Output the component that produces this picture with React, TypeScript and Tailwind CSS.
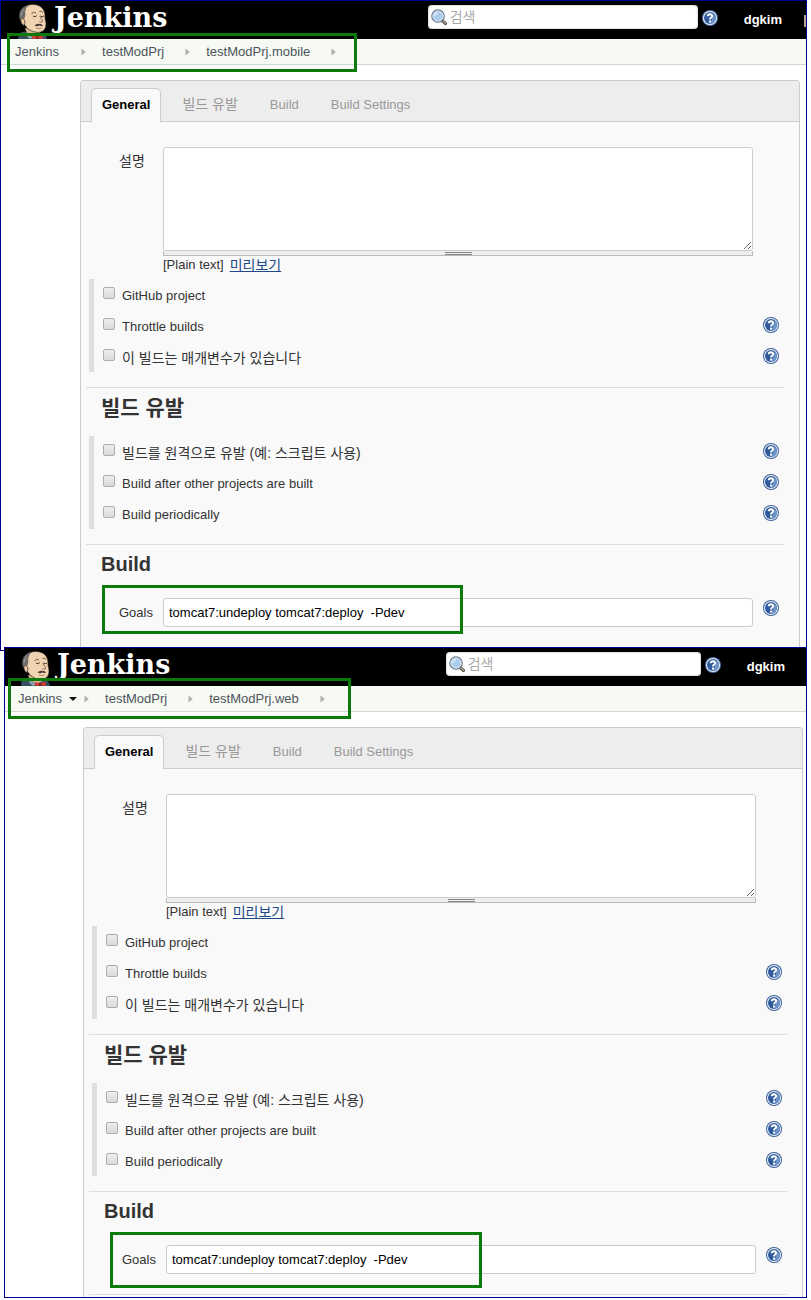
import React from "react";

type PanelProps = {
  id: string;
  module: string;
  menuOpen?: boolean;
  divider?: boolean;
  frame: string;
  headerPad: string;
  searchWidth: string;
  userMargin: string;
  cardMargin: string;
  crumbPad: string;
  crumbMark: string;
  goalsMark: string;
};

function Mascot() {
  return (
    <svg viewBox="0 0 30 35" className="h-[35px] w-[30px] shrink-0" aria-hidden="true">
      <path d="M0 35 L0.500 30 Q3 27.500 7 27.500 L14 32 L24 29 Q28 29.500 29 35 Z" fill="#34505f" />
      <path d="M7 24 L9 29 L15 33 L22 30 L22 26 Z" fill="#d9b794" />
      <path d="M8 28 L15 33.500 L12 35 L8.500 32 Z" fill="#8fa0a8" />
      <path
        d="M8 2 Q13 -0.500 18 0.700 Q24.500 2 26.500 8 Q27.300 11 27 14 Q28.800 20 27.600 23.500 Q25.500 28.300 20 28.500 Q14 28.500 9.500 24.500 L6 20 Q3 17 4.500 12 Z"
        fill="#f0d3b0"
        stroke="#2c211c"
        strokeWidth="0.700"
      />
      <path d="M11 0.800 Q3 2.500 1.500 9 Q0.800 13 2 16 L5 15 L6.500 14.500 L7.500 10 Q6.500 8.500 7.500 6.500 Q8 3.500 11 0.800 Z" fill="#6e6b6a" />
      <path d="M3 12 Q3 8 6 5.500" fill="none" stroke="#a7a3a0" strokeWidth="0.900" />
      <path d="M2.500 15.500 Q5 13.500 6.700 16 Q7.500 19.500 6 21.500 Q3 20.500 2.500 15.500 Z" fill="#ecc9a6" stroke="#3a2a22" strokeWidth="0.700" />
      <path d="M13.500 9.800 Q15.500 7.200 18 9 M21.500 7.500 Q23.500 6.500 25 8.500" fill="none" stroke="#4b372c" strokeWidth="0.800" />
      <path d="M15 12 Q17.500 13.800 18.800 11.500 M22.300 12 Q24 13.600 26 12" fill="none" stroke="#33251e" strokeWidth="0.900" />
      <path d="M21.700 12.500 Q24.500 15.500 24.700 17.300 Q23.500 19 21.300 17.800" fill="none" stroke="#6a4838" strokeWidth="0.800" />
      <path d="M16.500 21.500 Q19 18.800 21.500 20 Q24 19.500 25 21.500 Q23 22.500 21.300 21.600 Q19 23 16.500 21.500 Z" fill="#493a33" />
      <path d="M18 24 Q20.500 25.500 23.500 23.800" fill="none" stroke="#8a5a48" strokeWidth="0.700" />
      <path d="M14 31 L19 32.300 L24.500 30.500 L25 35 L20 34.300 L14.500 35 Z" fill="#d43a30" />
      <path d="M18 32 L20.500 32 L20.500 35 L18 35 Z" fill="#8d221d" />
    </svg>
  );
}

function HelpButton({ label, dark }: { label: string; dark?: boolean }) {
  return (
    <button type="button" aria-label={label} className="block h-4 w-4 shrink-0">
      <svg viewBox="0 0 16 16" className="h-4 w-4" aria-hidden="true">
        <circle cx="8" cy="8" r="8" fill={dark ? "#4a6fa8" : "#3a5f98"} />
        <circle cx="8" cy="8" r="7" fill="#f2f6fb" />
        <circle cx="8" cy="8" r="6" fill="#2f5a9b" />
        <path d="M8 14 A6 6 0 0 0 14 8 A6 6 0 0 0 12 3.500 Z" fill="#6d94c8" />
        <path d="M5.700 6.200 Q5.800 4.200 8 4.200 Q10.300 4.300 10.200 6 Q10.100 7.100 8.900 7.800 Q8 8.400 8 9.600" fill="none" stroke="#fff" strokeWidth="1.900" />
        <rect x="7" y="10.600" width="2" height="2" fill="#fff" />
      </svg>
    </button>
  );
}

function SearchIcon() {
  return (
    <svg viewBox="0 0 17 17" className="h-[17px] w-[17px] shrink-0" aria-hidden="true">
      <path d="M10.500 11 L14.500 14.500" stroke="#555" strokeWidth="3.200" strokeLinecap="round" />
      <path d="M12 12 L14.500 14.300" stroke="#b5a98d" strokeWidth="1.200" strokeLinecap="round" />
      <circle cx="7" cy="7" r="6.200" fill="#a9cbec" stroke="#6c7883" strokeWidth="1.200" />
      <circle cx="7" cy="7" r="5" fill="none" stroke="#e3eef8" strokeWidth="0.900" />
      <path d="M4 7 Q4 4.300 7 4" fill="none" stroke="#e8f2fb" strokeWidth="1.200" />
    </svg>
  );
}

function CrumbArrow() {
  return (
    <svg viewBox="0 0 5 8" className="mr-4 h-2 w-[5px] shrink-0" aria-hidden="true">
      <path d="M0.500 0.500 L4.800 4 L0.500 7.500 Z" fill="#aeb0ab" />
    </svg>
  );
}

function CheckRow({ id, text, help, korean }: { id: string; text: string; help?: boolean; korean?: boolean }) {
  return (
    <div className="flex h-[31px] items-center justify-between">
      <div className="flex items-center gap-[7px]">
        <input
          id={id}
          type="checkbox"
          className="mb-1 h-3 w-3 appearance-none rounded-xs border border-[#adadad] bg-linear-to-b from-[#eeeeee] to-[#dadada] checked:bg-[#34609f]"
        />
        <label htmlFor={id} className={korean ? "pt-0.5 text-sm leading-5" : "pt-0.5 leading-5"}>
          {text}
        </label>
      </div>
      {help && (
        <div className="pr-[5px] pb-0.5">
          <HelpButton label={`도움말: ${text}`} />
        </div>
      )}
    </div>
  );
}

function CheckGroup({ children }: { children: React.ReactNode }) {
  return <div className="ml-[3px] border-l-[5px] border-[#dfdfdf] pl-[9px]">{children}</div>;
}

function ConfigPanel(p: PanelProps) {
  return (
    <section className={`relative border border-[#000090] bg-white ${p.frame}`}>
      <header className={`flex h-[38px] items-start justify-between bg-black ${p.headerPad}`}>
        <a href="#" className="flex h-[38px] items-start gap-1.5 overflow-hidden pt-[3px] text-white">
          <Mascot />
          <span className="font-['DejaVu_Serif',serif] text-[27px] leading-7 font-bold">Jenkins</span>
        </a>
        <div className="flex items-start pt-1">
          <label className={`flex h-6 items-center gap-0.5 rounded-sm bg-white pl-[3px] shadow-[inset_0_0_2px_#999999] ${p.searchWidth}`}>
            <SearchIcon />
            <input
              type="search"
              aria-label="검색"
              placeholder="검색"
              className="w-full min-w-0 bg-transparent text-sm leading-5 outline-none placeholder:text-[#a9a9a9]"
            />
          </label>
          <div className="pt-[5px] pl-1">
            <HelpButton label="검색 도움말" dark />
          </div>
          <a href="#" className={`ml-[26px] pt-[5px] leading-5 font-bold text-white ${p.userMargin}`}>
            dgkim
          </a>
          {p.divider && <span className="mt-2.5 h-3 w-0.5 bg-[#b9a184]" />}
        </div>
      </header>

      <nav aria-label="경로" className={`relative flex h-[26px] items-center border-b border-[#d3d7cf] bg-[#f6faf2] text-[#4d545d] ${p.crumbPad}`}>
        <a href="#">Jenkins</a>
        <span className="flex w-[22px] justify-center">
          {p.menuOpen && (
            <svg viewBox="0 0 8 4" className="h-1 w-2" aria-hidden="true">
              <path d="M0 0 H8 L4 4 Z" fill="#111" />
            </svg>
          )}
        </span>
        <CrumbArrow />
        <a href="#" className="mr-[21px]">testModPrj</a>
        <CrumbArrow />
        <a href="#" className="mr-[21px]">{p.module}</a>
        <CrumbArrow />
        <span className={`pointer-events-none absolute z-10 border-3 border-[#0b7a0b] ${p.crumbMark}`} />
      </nav>

      <div className={`mt-[15px] rounded-t-sm border border-b-0 border-[#cccccc] bg-[#f9f9f9] ${p.cardMargin}`}>
        <div role="tablist" className="flex h-[41px] items-end gap-2.5 rounded-t-sm border-b border-[#cccccc] bg-[#ededed] pl-2.5 text-[#999999]">
          <button role="tab" aria-selected="true" type="button" className="-mb-px h-[34px] rounded-t-[5px] border border-b-0 border-[#cccccc] bg-[#f9f9f9] px-2.5 pb-0.5 font-bold text-black">
            General
          </button>
          <button role="tab" type="button" className="h-[34px] px-[11px] text-sm">빌드 유발</button>
          <button role="tab" type="button" className="h-[34px] px-[11px] pt-0.5">Build</button>
          <button role="tab" type="button" className="h-[34px] px-[11px] pt-0.5">Build Settings</button>
        </div>

        <form className="pt-[25px] pr-[15px] pb-0.5 pl-[5px]" onSubmit={(e) => e.preventDefault()}>
          <div className="flex pr-[31px]">
            <label htmlFor={`${p.id}-desc`} className="w-[77px] shrink-0 pt-1 pl-[33px] text-sm leading-5">
              설명
            </label>
            <div className="flex-1">
              <textarea
                id={`${p.id}-desc`}
                className="block h-[104px] w-full resize rounded-[3px] border border-[#cccccc] bg-white p-1.5 text-black"
              />
              <div className="flex h-[5px] items-center justify-center border border-t-0 border-[#bbbbbb] bg-[#eeeeee]">
                <span className="h-[3px] w-[27px] border-y border-[#888888]" />
              </div>
              <p className="flex h-[18px] items-center gap-1.5 leading-[18px]">
                [Plain text]
                <a href="#" className="text-sm leading-[18px] text-[#204a87] underline">미리보기</a>
              </p>
            </div>
          </div>

          <div className="mt-[5px]">
            <CheckGroup>
              <CheckRow id={`${p.id}-github`} text="GitHub project" />
              <CheckRow id={`${p.id}-throttle`} text="Throttle builds" help />
              <CheckRow id={`${p.id}-params`} text="이 빌드는 매개변수가 있습니다" help korean />
            </CheckGroup>
          </div>

          <h2 className="mt-[15px] mb-2 border-t border-[#dddddd] pl-[15px] text-[21px] leading-10 font-bold">빌드 유발</h2>
          <CheckGroup>
            <CheckRow id={`${p.id}-remote`} text="빌드를 원격으로 유발 (예: 스크립트 사용)" help korean />
            <CheckRow id={`${p.id}-after`} text="Build after other projects are built" help />
            <CheckRow id={`${p.id}-periodic`} text="Build periodically" help />
          </CheckGroup>

          <h2 className="mt-[15px] border-t border-[#dddddd] pl-[15px] text-xl leading-[38px] font-bold">Build</h2>
          <div className="relative mt-[15px] mb-5 flex items-start pr-[5px]">
            <label htmlFor={`${p.id}-goals`} className="w-[77px] shrink-0 pt-[5px] pl-[33px] leading-5">
              Goals
            </label>
            <input
              id={`${p.id}-goals`}
              type="text"
              defaultValue="tomcat7:undeploy tomcat7:deploy  -Pdev"
              className="h-[29px] min-w-0 flex-1 rounded-[3px] border border-[#cccccc] bg-white px-[5px] text-black"
            />
            <div className="pt-0.5 pl-2.5">
              <HelpButton label="도움말: Goals" />
            </div>
            <span className={`pointer-events-none absolute z-10 border-3 border-[#0b7a0b] ${p.goalsMark}`} />
          </div>
          <hr className="border-[#dddddd]" />
        </form>
      </div>
    </section>
  );
}

export default function App() {
  return (
    <main className="bg-white pr-1 font-['Liberation_Sans','Noto_Sans_CJK_KR',sans-serif] text-[13px] leading-5 text-[#333333]">
      <ConfigPanel
        id="mobile"
        module="testModPrj.mobile"
        divider
        frame=""
        headerPad="pl-[17px]"
        searchWidth="w-[270px]"
        userMargin="mr-[22px]"
        cardMargin="ml-[79px] mr-1.5"
        crumbPad="pl-3.5"
        crumbMark="-top-1.5 left-1.5 h-[39px] w-[350px]"
        goalsMark="-top-[13px] left-4 h-[49px] w-[361px]"
      />
      <ConfigPanel
        id="web"
        module="testModPrj.web"
        menuOpen
        frame="-mt-1 ml-1"
        headerPad="pl-4"
        searchWidth="w-[255px]"
        userMargin="mr-[21px]"
        cardMargin="ml-[78px] mr-[3px]"
        crumbPad="pl-[13px]"
        crumbMark="-top-2 left-[3px] h-[41px] w-[343px]"
        goalsMark="-top-[13px] left-[21px] h-[56px] w-[372px]"
      />
    </main>
  );
}
